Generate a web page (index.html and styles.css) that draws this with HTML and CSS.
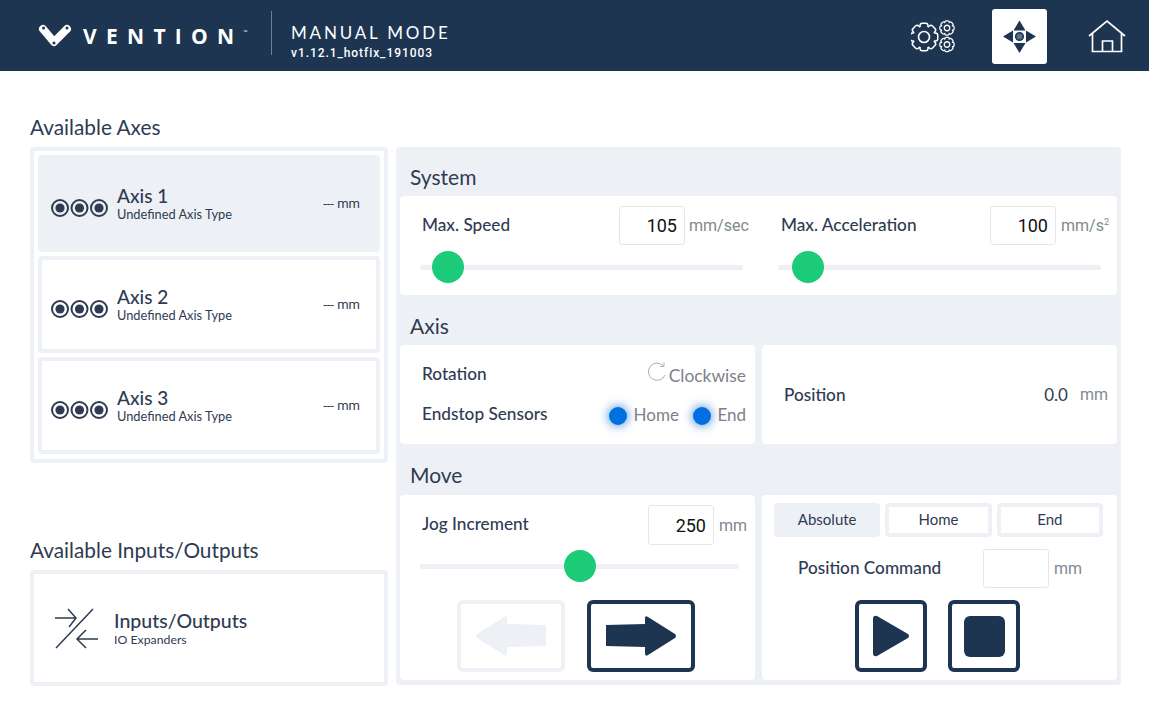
FILE: index.html
```html
<!DOCTYPE html>
<html lang="en">
<head>
  <meta charset="UTF-8" />
  <title>Manual Mode - Vention</title>
  <link rel="stylesheet" href="styles.css">
</head>
<body>
  <header class="topbar">
    <svg class="logo" width="36" height="26" viewBox="0 0 36 26">
      <path d="M6 6 L17 19 L30 6" fill="none" stroke="#fff" stroke-width="8" stroke-linecap="round" stroke-linejoin="round"/>
      <circle cx="6.5" cy="5" r="1.5" fill="#1e3552"/>
      <circle cx="17" cy="20" r="1.5" fill="#1e3552"/>
      <circle cx="30" cy="5" r="1.5" fill="#1e3552"/>
    </svg>
    <div class="brand">VENTION<span class="tm">™</span></div>
    <div class="divider"></div>
    <div class="mode">
      <div class="mode-title">MANUAL MODE</div>
      <div class="mode-version">v1.12.1_hotfix_191003</div>
    </div>
    <nav class="nav">
      <svg class="nav-gears" width="48" height="46" viewBox="0 0 48 46">
        <defs>
          <g id="gearShape">
            <circle r="10.5"/>
            <rect x="-3.2" y="-13" width="6.4" height="26" rx="1.5"/>
            <rect x="-3.2" y="-13" width="6.4" height="26" rx="1.5" transform="rotate(45)"/>
            <rect x="-3.2" y="-13" width="6.4" height="26" rx="1.5" transform="rotate(90)"/>
            <rect x="-3.2" y="-13" width="6.4" height="26" rx="1.5" transform="rotate(135)"/>
          </g>
          <g id="gear">
            <use href="#gearShape" fill="#fff" stroke="#fff" stroke-width="3"/>
            <use href="#gearShape" fill="#1e3552"/>
            <circle r="5.5" fill="none" stroke="#fff" stroke-width="1.6"/>
          </g>
          <g id="gearSmall">
            <use href="#gearShape" fill="#fff" stroke="#fff" stroke-width="5"/>
            <use href="#gearShape" fill="#1e3552"/>
            <circle r="5.5" fill="none" stroke="#fff" stroke-width="2.6"/>
          </g>
        </defs>
        <use href="#gear" transform="translate(13 24)"/>
        <use href="#gearSmall" transform="translate(36 15) scale(.5)"/>
        <use href="#gearSmall" transform="translate(36 31.5) scale(.5)"/>
      </svg>
      <div class="nav-active">
        <svg width="34" height="34" viewBox="0 0 34 34">
          <path d="M16.5 0.5 L22.5 10.5 H10.5 Z M16.5 33 L22.5 23 H10.5 Z M0 16.5 L10 10.5 V22.5 Z M33 16.5 L23 10.5 V22.5 Z" fill="#1e3552"/>
          <circle cx="16.5" cy="16.5" r="3.8" fill="#5d6f85" stroke="#1e3552" stroke-width="1.6"/>
        </svg>
      </div>
      <svg class="nav-home" width="38" height="34" viewBox="0 0 38 34">
        <path d="M1 17 L19 2 L37 17 M4.5 14.5 V32.5 H33.5 V14.5 M14.5 32.5 V22 H24.5 V32.5" fill="none" stroke="#fff" stroke-width="1.7"/>
      </svg>
    </nav>
  </header>

  <svg class="hidden" width="0" height="0">
    <defs>
      <g id="target">
        <circle r="8" fill="none" stroke="#2f3b52" stroke-width="2"/>
        <circle r="4.6" fill="#2f3b52"/>
      </g>
      <g id="targets">
        <use href="#target" x="9"/>
        <use href="#target" x="28.5"/>
        <use href="#target" x="48"/>
      </g>
    </defs>
  </svg>

  <main class="layout">
    <section class="left">
      <h2 class="left-title">Available Axes</h2>
      <div class="axis-list">
        <div class="axis-item selected">
          <svg class="targets" width="58" height="20" viewBox="0 -10 58 20"><use href="#targets"/></svg>
          <div class="axis-text">
            <div class="axis-name">Axis 1</div>
            <div class="axis-type">Undefined Axis Type</div>
          </div>
          <div class="axis-pos">--- mm</div>
        </div>
        <div class="axis-item">
          <svg class="targets" width="58" height="20" viewBox="0 -10 58 20"><use href="#targets"/></svg>
          <div class="axis-text">
            <div class="axis-name">Axis 2</div>
            <div class="axis-type">Undefined Axis Type</div>
          </div>
          <div class="axis-pos">--- mm</div>
        </div>
        <div class="axis-item">
          <svg class="targets" width="58" height="20" viewBox="0 -10 58 20"><use href="#targets"/></svg>
          <div class="axis-text">
            <div class="axis-name">Axis 3</div>
            <div class="axis-type">Undefined Axis Type</div>
          </div>
          <div class="axis-pos">--- mm</div>
        </div>
      </div>

      <h2 class="left-title io-title">Available Inputs/Outputs</h2>
      <div class="io-box">
        <svg width="44" height="42" viewBox="0 0 44 42">
          <path d="M0 11 H20 M13 2 L21 11 L14 20 M43 32 H23 M31 23 L22 32 L31 41 M38 2 L1 41" fill="none" stroke="#2f3b52" stroke-width="1.5"/>
        </svg>
        <div class="io-text">
          <div class="io-name">Inputs/Outputs</div>
          <div class="io-type">IO Expanders</div>
        </div>
      </div>
    </section>

    <section class="panel">
      <h3 class="panel-title first">System</h3>
      <div class="card system">
        <div class="control speed">
          <div class="control-row">
            <span class="label">Max. Speed</span>
            <input class="num" type="text" value="105" />
            <span class="unit unit-wide">mm/sec</span>
          </div>
          <div class="track"><div class="knob" style="left: 12px"></div></div>
        </div>
        <div class="control accel">
          <div class="control-row">
            <span class="label">Max. Acceleration</span>
            <input class="num" type="text" value="100" />
            <span class="unit">mm/s<sup>2</sup></span>
          </div>
          <div class="track"><div class="knob" style="left: 14px"></div></div>
        </div>
      </div>

      <h3 class="panel-title">Axis</h3>
      <div class="split">
        <div class="card axis-card">
          <div class="status-row">
            <span class="label">Rotation</span>
            <span class="status rotation">
              <svg width="20" height="20" viewBox="0 0 20 20">
                <path d="M16.5 4 A8.6 8.6 0 1 0 18 13" fill="none" stroke="#a9afb5" stroke-width="1"/>
                <path d="M17 0.5 V4.5 H13" fill="none" stroke="#a9afb5" stroke-width="1"/>
              </svg>
              <span class="status-text">Clockwise</span>
            </span>
          </div>
          <div class="status-row">
            <span class="label">Endstop Sensors</span>
            <span class="status sensors">
              <i class="led"></i><span class="status-text">Home</span>
              <i class="led led-end"></i><span class="status-text">End</span>
            </span>
          </div>
        </div>
        <div class="card position-card">
          <span class="label">Position</span>
          <span class="pos-value">0.0</span>
          <span class="unit">mm</span>
        </div>
      </div>

      <h3 class="panel-title move-title">Move</h3>
      <div class="split move-split">
        <div class="card jog">
          <div class="control-row">
            <span class="label">Jog Increment</span>
            <input class="num" type="text" value="250" />
            <span class="unit">mm</span>
          </div>
          <div class="track"><div class="knob" style="left: 144px"></div></div>
          <div class="jog-buttons">
            <button class="icon-btn wide disabled" type="button">
              <svg width="72" height="42" viewBox="-1 0 72 42"><path d="M70 10 L31 9 V3 Q31 0 28 2 L1 19 Q-1 21 1 23 L28 40 Q31 42 31 38 V32 L70 31 Z" fill="#edf0f5"/></svg>
            </button>
            <button class="icon-btn wide" type="button">
              <svg width="72" height="42" viewBox="0 0 72 42"><path d="M1 10 L40 9 V3 Q40 0 43 2 L70 19 Q72 21 70 23 L43 40 Q40 42 40 38 V32 L1 31 Z" fill="#1e3552"/></svg>
            </button>
          </div>
        </div>
        <div class="card command">
          <div class="tabs">
            <div class="tab active">Absolute</div>
            <div class="tab">Home</div>
            <div class="tab">End</div>
          </div>
          <div class="command-row">
            <span class="label">Position Command</span>
            <input class="num" type="text" value="" />
            <span class="unit">mm</span>
          </div>
          <div class="command-buttons">
            <button class="icon-btn" type="button">
              <svg width="38" height="42" viewBox="0 0 38 42"><path d="M1 4 Q1 0 5 1 L36 19 Q38 21 36 23 L5 41 Q1 42 1 38 Z" fill="#1e3552"/></svg>
            </button>
            <button class="icon-btn" type="button">
              <div class="stop-square"></div>
            </button>
          </div>
        </div>
      </div>
    </section>
  </main>
</body>
</html>
```
FILE: styles.css
```css
* {
  box-sizing: border-box;
}

body {
  margin: 0;
  font-family: 'Lato', sans-serif;
  color: #2f3b52;
  background: white;
}

.hidden {
  position: absolute;
}

/* top bar */
.topbar {
  display: flex;
  align-items: center;
  height: 71px;
  background: #1e3552;
  color: white;
  padding-left: 37px;
}

.brand {
  margin-left: 10px;
  font-size: 21px;
  font-weight: 700;
  letter-spacing: 9.3px;
  width: 188px;
  font-family: 'Open Sans', sans-serif;
}

.tm {
  font-size: 5px;
  letter-spacing: 0;
  vertical-align: 10px;
}

.divider {
  align-self: flex-start;
  width: 1px;
  height: 44px;
  margin-top: 11px;
  background: #6f8094;
}

.mode {
  align-self: flex-start;
  margin-left: 19px;
  padding-top: 23px;
}

.mode-title {
  font-size: 17px;
  letter-spacing: 2.8px;
  line-height: 20px;
}

.mode-version {
  font-family: 'Roboto', sans-serif;
  font-size: 12px;
  font-weight: 500;
  letter-spacing: 0.93px;
  line-height: 17px;
  margin-top: 2px;
}

.nav {
  margin-left: auto;
  display: flex;
  align-items: center;
  padding-right: 23px;
}

.nav-gears {
  margin-right: 33px;
}

.nav-active {
  display: flex;
  justify-content: center;
  align-items: center;
  width: 55px;
  height: 55px;
  margin-top: 2px;
  background: white;
  border-radius: 3px;
  margin-right: 41px;
}

/* main layout */
.layout {
  display: flex;
  gap: 8px;
  padding: 46px 0 0 30px;
}

.left {
  width: 358px;
}

.left-title {
  margin: 0;
  height: 30px;
  line-height: 20px;
  font-size: 20.8px;
  font-weight: 400;
}

.io-title {
  margin-top: 77px;
}

.axis-list {
  display: flex;
  flex-direction: column;
  gap: 4px;
  height: 316px;
  padding: 4px;
  border: 4px solid #edf0f5;
  border-radius: 4px;
}

.axis-item {
  display: flex;
  align-items: center;
  height: 97px;
  padding: 0 16px 0 9px;
  border: 4px solid #edf0f5;
  border-radius: 4px;
}

.axis-item.selected {
  background: #edf0f5;
}

.targets {
  margin-right: 8px;
  margin-top: 9px;
}

.axis-text {
  flex: 1;
}

.axis-name {
  font-size: 19px;
  line-height: 20px;
  font-weight: 500;
}

.axis-type {
  font-size: 12.8px;
  line-height: 16px;
}

.axis-pos {
  font-family: 'Roboto', sans-serif;
  font-size: 13px;
}

.io-box {
  display: flex;
  align-items: center;
  gap: 15px;
  height: 116px;
  padding-left: 21px;
  border: 4px solid #edf0f5;
  border-radius: 4px;
}

.io-name {
  font-size: 19.5px;
  line-height: 22px;
  font-weight: 500;
}

.io-type {
  font-size: 12.3px;
  line-height: 15px;
}

/* right panel */
.panel {
  width: 725px;
  height: 538px;
  margin-top: 30px;
  padding: 0 4px;
  background: #edf0f5;
  border-radius: 4px;
}

.panel-title {
  margin: 0;
  height: 50px;
  padding: 20px 0 0 10px;
  font-size: 21px;
  line-height: 22px;
  font-weight: 400;
}

.panel-title.first {
  height: 49px;
  padding-top: 19px;
}

.panel-title.move-title {
  height: 51px;
  padding-top: 20px;
}

.card {
  background: white;
  border-radius: 4px;
}

.system {
  display: flex;
  height: 99px;
}

.control {
  padding-top: 10px;
}

.speed {
  width: 358px;
  padding-left: 20px;
  padding-right: 15px;
}

.accel {
  width: 359px;
  padding-left: 20px;
  padding-right: 16px;
}

.control-row {
  display: flex;
  align-items: center;
  height: 39px;
  padding-left: 2px;
}

.label {
  font-size: 17.2px;
  line-height: 18px;
  font-weight: 500;
  color: #2f3b52;
  padding-bottom: 2px;
}

.control-row .label {
  flex: 1;
}

.num {
  width: 66px;
  height: 39px;
  padding: 0 7px;
  border: 1px solid #e4e6e8;
  border-radius: 3px;
  background: white;
  color: #111;
  font-family: 'Roboto', sans-serif;
  font-size: 18px;
  text-align: right;
}

.unit {
  margin-left: 4px;
  font-family: 'Roboto', sans-serif;
  font-size: 16px;
  color: #80898f;
  white-space: nowrap;
}

.unit sup {
  font-size: 9px;
}

.speed .control-row {
  margin-right: -7px;
}

.speed .unit {
  width: 61px;
}

.accel .unit {
  width: 47px;
  margin-left: 5px;
}

.accel .control-row {
  padding-left: 3px;
  margin-right: -7px;
}

.track {
  position: relative;
  height: 5px;
  margin-top: 20px;
  background: #edf0f5;
  border-radius: 3px;
}

.knob {
  position: absolute;
  top: -14px;
  width: 32px;
  height: 32px;
  border-radius: 50%;
  background: #1ccb78;
}

.split {
  display: flex;
  gap: 7px;
  height: 99px;
}

.split .card {
  width: 355px;
}

.axis-card {
  padding: 9px 9px 0 22px;
}

.status-row {
  display: flex;
  justify-content: space-between;
  align-items: center;
  height: 40px;
}

.status-row .label {
  padding-bottom: 0;
}

.status {
  display: flex;
  align-items: center;
  color: #80808a;
  font-size: 17.4px;
}

.sensors {
  font-size: 17px;
}

.rotation svg {
  margin-right: 2px;
  margin-top: -4px;
}

.rotation .status-text {
  margin-top: 2px;
}

.led {
  width: 18px;
  height: 18px;
  margin-top: 3px;
  margin-right: 6.5px;
  border-radius: 50%;
  background: #0070e0;
  box-shadow: 0 0 8px 2px rgba(0, 96, 210, 0.5);
}

.led-end {
  margin-left: 14px;
}

.position-card {
  display: flex;
  align-items: center;
  padding: 0 9px 0 22px;
}

.position-card .label {
  flex: 1;
  padding-bottom: 0;
}

.pos-value {
  font-size: 17px;
  margin-right: 8px;
}

.move-split {
  height: 185px;
}

.jog {
  padding: 10px 9px 0 20px;
}

.jog .control-row {
  height: 40px;
}

.jog .num {
  height: 40px;
}

.jog .unit {
  margin-left: 5px;
  width: 27px;
}

.jog .track {
  margin: 19px 7px 0 0;
}

.jog-buttons {
  display: flex;
  justify-content: center;
  gap: 22px;
  margin: 31px 14px 0 0;
}

.icon-btn {
  display: flex;
  justify-content: center;
  align-items: center;
  width: 72px;
  height: 72px;
  padding: 0;
  border: 4px solid #1e3552;
  border-radius: 6px;
  background: white;
}

.icon-btn.wide {
  width: 108px;
}

.icon-btn.disabled {
  border-color: #edf0f5;
}

.stop-square {
  width: 41px;
  height: 41px;
  border-radius: 6px;
  background: #1e3552;
}

.command {
  padding: 8px 14px 0 12px;
}

.tabs {
  display: flex;
  gap: 5px;
}

.tab {
  flex: 1;
  display: flex;
  justify-content: center;
  align-items: center;
  height: 34px;
  padding-bottom: 2px;
  border: 4px solid #edf0f5;
  border-radius: 4px;
  font-size: 15px;
}

.tab.active {
  background: #edf0f5;
}

.command-row {
  display: flex;
  align-items: center;
  height: 39px;
  margin-top: 12px;
  padding-left: 24px;
}

.command-row .label {
  width: 185px;
}

.command-row .unit {
  margin-left: 5px;
}

.command-buttons {
  display: flex;
  gap: 21px;
  margin: 12px 0 0 81px;
}
```
